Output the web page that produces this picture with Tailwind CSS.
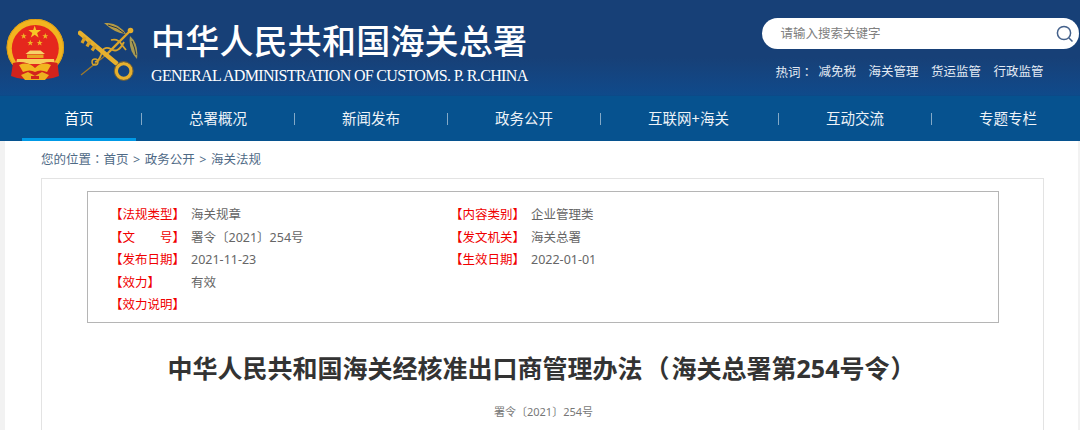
<!DOCTYPE html>
<html lang="zh-CN">
<head>
    <meta charset="UTF-8">
    <meta name="viewport" content="width=device-width, initial-scale=1.0">
    <title>海关总署</title>
    <script src="https://cdn.jsdelivr.net/npm/@tailwindcss/browser@4"></script>
</head>
<body class="h-[430px] overflow-hidden bg-[#f2f2f2] font-['Noto_Sans','Noto_Sans_CJK_SC',sans-serif] text-[12.5px]">

    <!-- header -->
    <header class="h-[95px] flex justify-between bg-gradient-to-b from-[#174077] from-60% to-[#0f4a8b]">
        <div class="flex">
            <svg class="w-[58px] h-[62px] ml-[6px] mt-[19px]" viewBox="6 19 58 62">
                <circle cx="35.3" cy="47.5" r="28.7" fill="#f2b51f"/>
                <circle cx="35.3" cy="47.5" r="28.2" fill="none" stroke="#d99c18" stroke-width="1"/>
                <circle cx="35.3" cy="48.5" r="23.5" fill="#e5271d"/>
                <polygon points="34.7,25.5 36.2,30 41,30 37.1,32.9 38.6,37.5 34.7,34.7 30.8,37.5 32.3,32.9 28.4,30 33.2,30" fill="#f6c626"/>
                <polygon points="23.7,33 24.5,35.2 26.7,35.2 24.9,36.6 25.6,38.8 23.7,37.5 21.8,38.8 22.5,36.6 20.7,35.2 22.9,35.2" fill="#f0b626"/>
                <polygon points="45.3,33 46.1,35.2 48.3,35.2 46.5,36.6 47.2,38.8 45.3,37.5 43.4,38.8 44.1,36.6 42.3,35.2 44.5,35.2" fill="#f0b626"/>
                <polygon points="30.3,39.7 31.1,41.9 33.3,41.9 31.5,43.3 32.2,45.5 30.3,44.2 28.4,45.5 29.1,43.3 27.3,41.9 29.5,41.9" fill="#f0b626"/>
                <polygon points="39.7,39.7 40.5,41.9 42.7,41.9 40.9,43.3 41.6,45.5 39.7,44.2 37.8,45.5 38.5,43.3 36.7,41.9 38.9,41.9" fill="#f0b626"/>
                <path d="M30 50.5 H40.5 L45 54 H25.5 Z" fill="#f7d26a"/>
                <path d="M27 54.5 H43.5 V58 H27 Z" fill="#e9a522"/>
                <path d="M17 59 H54 L55 64 H16 Z" fill="#f7cf5c"/>
                <path d="M13 63 Q24 60 35 67 Q46 60 57.5 63 L59 76 Q48 81 35 78 Q22 81 11 76 Z" fill="#d2231c"/>
                <path d="M19 65 Q28 61 35 68 Q42 61 51 65 L47 72 Q40 69 35 72 Q30 69 23 72 Z" fill="#f2b51f"/>
                <path d="M21 75 L28 72 L35 76 L42 72 L49 75 L45 80 H25 Z" fill="#edb020"/>
                <path d="M31 76 H39 V79 H31 Z" fill="#d2231c"/>
            </svg>
            <svg class="w-[60px] h-[58px] ml-[14px] mt-[23px]" viewBox="78 23 60 58">
                <path d="M81 75 L106 55" stroke="#a07a2a" stroke-width="1.3" fill="none"/>
                <path d="M104 23 Q118 22 126 34 Q116 34 104 23 Z" fill="#b59a45"/>
                <path d="M108 25 Q118 27 124 33" stroke="#26384a" stroke-width="1" fill="none"/>
                <path d="M130 36 Q139 44 137 59 Q128 50 130 36 Z" fill="#a89a52"/>
                <path d="M132 41 Q135 48 136 55" stroke="#2f3d45" stroke-width="1" fill="none"/>
                <path d="M106 55 L130 31" stroke="#dca52a" stroke-width="2.4" fill="none"/>
                <circle cx="130.5" cy="30.5" r="2.8" fill="#e6ae2c"/>
                <path d="M111 40 Q118 38 122 45 Q126 50 126 50 M124 42 Q118 54 111 49 Q103 45 101 55 Q99 61 95 62" stroke="#d7a42d" stroke-width="1.8" fill="none"/>
                <path d="M80 33 L116 63" stroke="#e6b02e" stroke-width="4.6" stroke-linecap="round" fill="none"/>
                <path d="M85 37 L82 43 M90 41 L87 46.5 M95.5 45.5 L92 50.5" stroke="#d9a126" stroke-width="3.2" fill="none"/>
                <circle cx="95" cy="62" r="3" fill="none" stroke="#d7a42d" stroke-width="1.4"/>
                <circle cx="123.7" cy="71" r="7.4" fill="none" stroke="#e6b02e" stroke-width="3.4"/>
                <circle cx="123.7" cy="71" r="9.4" fill="none" stroke="#9a6f1a" stroke-width="0.8"/>
            </svg>
            <div class="ml-[14px] text-white">
                <h1 class="mt-[17px] -ml-px text-[34px] leading-[46px] tracking-[0.2px] font-medium font-['Noto_Sans_CJK_SC',serif] whitespace-nowrap">中华人民共和国海关总署</h1>
                <p class="mt-[3px] -ml-px text-[16px] leading-[20px] tracking-[-0.66px] font-['Liberation_Serif',serif] whitespace-nowrap">GENERAL ADMINISTRATION OF CUSTOMS. P. R.CHINA</p>
            </div>
        </div>
        <div class="w-[317px] mr-px pt-[18px]">
            <div class="h-[31px] flex items-center justify-between rounded-full bg-white pl-[18.5px] pr-[5px]">
                <span class="pt-[2px] text-[#808080]">请输入搜索关键字</span>
                <svg class="w-[18px] h-[18px]" viewBox="0 0 18 18" fill="none" stroke="#44618b" stroke-width="1.5">
                    <circle cx="8" cy="8" r="6.6"/>
                    <path d="M13 13 L16.5 16.5"/>
                </svg>
            </div>
            <div class="flex gap-[12.5px] mt-[14px] ml-[13.5px] leading-[18px] text-[#e3eaf3]">
                <span class="mr-[-7px]">热词<span lang="zh-TW" class="font-['Noto_Sans_CJK_TC']">：</span></span>
                <span>减免税</span>
                <span>海关管理</span>
                <span>货运监管</span>
                <span>行政监管</span>
            </div>
        </div>
    </header>

    <!-- nav -->
    <nav class="h-[46px] flex items-center pl-[22px] bg-[#06528f] border-t-[1px] border-[#0c4a88] text-[14.5px] text-[#eef3f8] overflow-hidden">
        <a class="w-[114px] h-full shrink-0 flex items-center justify-center border-b-[3px] border-[#0099e6] pt-[3px] text-white">首页</a>
        <span class="w-px h-[12px] ml-[5px] shrink-0 bg-white/50"></span>
        <a class="w-[152px] shrink-0 text-center">总署概况</a>
        <span class="w-px h-[12px] shrink-0 bg-white/50"></span>
        <a class="w-[152px] shrink-0 text-center">新闻发布</a>
        <span class="w-px h-[12px] shrink-0 bg-white/50"></span>
        <a class="w-[152px] shrink-0 text-center">政务公开</a>
        <span class="w-px h-[12px] shrink-0 bg-white/50"></span>
        <a class="w-[177px] shrink-0 -ml-px text-center">互联网+海关</a>
        <span class="w-px h-[12px] ml-px shrink-0 bg-white/50"></span>
        <a class="w-[152px] shrink-0 text-center">互动交流</a>
        <span class="w-px h-[12px] shrink-0 bg-white/50"></span>
        <a class="w-[152px] shrink-0 text-center">专题专栏</a>
    </nav>

    <!-- content -->
    <main class="ml-[5px] mr-[2px] h-[300px] bg-white">
        <div class="ml-[36px] pt-[9px] h-[37px] leading-[18px] text-[#4f6a86]">您的位置<span lang="zh-TW" class="font-['Noto_Sans_CJK_TC']">：</span>首页<span class="mx-[4.5px]">&gt;</span>政务公开<span class="mx-[4.5px]">&gt;</span>海关法规</div>
        <section class="w-[1003px] ml-[36px] h-[300px] border border-[#e3e3e3] pt-[12px]">
            <div class="w-[912px] h-[132px] ml-[45px] border border-[#b5b5b5] pt-[12px] pl-[22px] leading-[22.6px] text-[#666666]">
                <div class="flex">
                    <div class="w-[340px] flex"><span class="w-[81px] text-[#f00000]">【法规类型】</span><span>海关规章</span></div>
                    <div class="flex"><span class="w-[81px] text-[#f00000]">【内容类别】</span><span>企业管理类</span></div>
                </div>
                <div class="flex">
                    <div class="w-[340px] flex"><span class="w-[81px] text-[#f00000]">【文　　号】</span><span>署令〔2021〕254号</span></div>
                    <div class="flex"><span class="w-[81px] text-[#f00000]">【发文机关】</span><span>海关总署</span></div>
                </div>
                <div class="flex">
                    <div class="w-[340px] flex"><span class="w-[81px] text-[#f00000]">【发布日期】</span><span>2021-11-23</span></div>
                    <div class="flex"><span class="w-[81px] text-[#f00000]">【生效日期】</span><span>2022-01-01</span></div>
                </div>
                <div class="flex"><span class="w-[81px] text-[#f00000]">【效力】</span><span>有效</span></div>
                <div class="flex"><span class="w-[81px] text-[#f00000]">【效力说明】</span></div>
            </div>
            <h2 class="mt-[26px] -ml-px text-center text-[25px] leading-[36px] font-bold text-[#333333] whitespace-nowrap">中华人民共和国海关经核准出口商管理办法<span lang="zh-TW" class="mx-[2px] font-['Noto_Sans_CJK_TC']">（</span>海关总署第254号令<span lang="zh-TW" class="mx-px font-['Noto_Sans_CJK_TC']">）</span></h2>
            <p class="mt-[17px] ml-[2px] text-center text-[11px] leading-[18px] text-[#777777]">署令〔2021〕254号</p>
        </section>
    </main>
</body>
</html>
